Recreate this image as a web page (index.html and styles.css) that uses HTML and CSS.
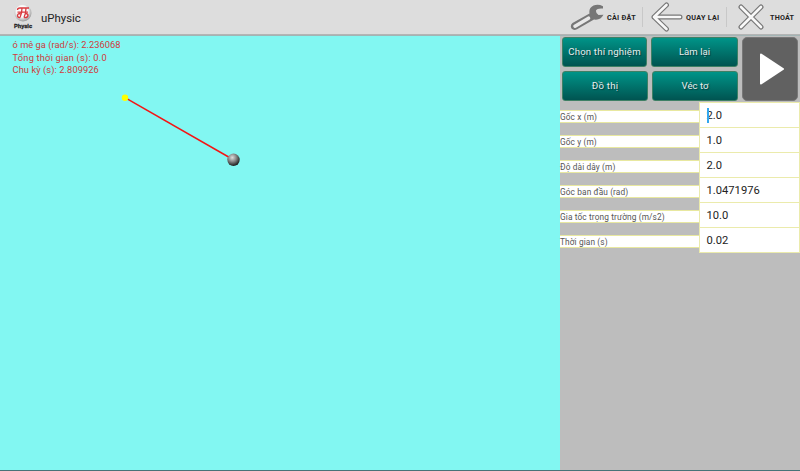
FILE: index.html
```
<!DOCTYPE html>
<html lang="vi">
<head>
<meta charset="utf-8">
<title>uPhysic</title>
<link rel="stylesheet" href="styles.css">
</head>
<body>
<header class="bar">
  <svg class="logo" width="20" height="28" viewBox="0 0 20 28">
    <defs><radialGradient id="disc" cx=".45" cy=".4" r=".6"><stop offset=".55" stop-color="#fafafa"/><stop offset="1" stop-color="#999"/></radialGradient></defs>
    <circle cx="10" cy="9" r="8.5" fill="url(#disc)"/>
    <path d="M4.500 6Q4.500 4 7 4H16M9 4Q9 9 7 13.500M13 4Q13 9 11 13.500M4.500 8.200H15M7.500 9.500Q4.500 9.500 4.500 12Q5 14 7 13.500M11 13.500Q14.500 14 15 11.500Q15 9.500 12.500 9.500" fill="none" stroke="#d93a3f" stroke-width="1.300"/>
    <text x="1" y="24" class="logo-text" textLength="18" lengthAdjust="spacingAndGlyphs">Physic</text>
  </svg>
  <h1>uPhysic</h1>
  <nav>
    <a class="set"><svg width="35" height="28" viewBox="0 0 35 28"><path d="M33 3.200Q28 .8 23.500 2.600Q18.500 5 19.500 10.500L2.500 20Q-.3 22.500 1.500 25.500Q3.800 28 7 26.300L24 16.500Q30.500 17.500 33.500 11.800L28.500 12Q25.800 10.500 26 7.500Q27 5 33 5.500Z" fill="#777"/><path d="M5 23.200L18.500 15.200" stroke="#e8e8e8" stroke-width="3.600" stroke-linecap="round"/></svg><span>CÀI ĐẶT</span></a>
    <a class="back"><svg width="32" height="30" viewBox="0 0 32 30"><path d="M15.500 3L3 15L15.500 27M3 15H29" class="outline"/><path d="M15.500 3L3 15L15.500 27M3 15H29" class="fill"/></svg><span>QUAY LẠI</span></a>
    <a class="exit"><svg width="26" height="26" viewBox="0 0 26 26"><path d="M3 3L23 23M23 3L3 23" class="outline"/><path d="M3 3L23 23M23 3L3 23" class="fill"/></svg><span>THOÁT</span></a>
  </nav>
</header>
<main>
  <section class="scene">
    <div class="stats"><p class="s1">ó mê ga (rad/s): 2.236068</p><p class="s2">Tổng thời gian (s): 0.0</p><p class="s3">Chu kỳ (s): 2.809926</p></div>
    <svg class="pendulum" width="130" height="90" viewBox="110 85 130 90">
      <defs><radialGradient id="ball" cx=".4" cy=".32" r=".65"><stop offset="0" stop-color="#ddd"/><stop offset=".5" stop-color="#888"/><stop offset="1" stop-color="#252525"/></radialGradient></defs>
      <path d="M125 97.700L233 159.500" stroke="#f51414" stroke-width="1.500"/>
      <circle cx="125" cy="97.700" r="3.200" fill="#ff0"/>
      <circle cx="233.500" cy="159.800" r="6.200" fill="url(#ball)"/>
    </svg>
  </section>
  <aside>
    <div class="controls">
      <div class="buttons">
        <div class="pair first"><button class="b1">Chọn thí nghiệm</button><button class="b2">Làm lại</button></div>
        <div class="pair second"><button class="b3">Đồ thị</button><button class="b4">Véc tơ</button></div>
      </div>
      <button class="play" aria-label="Play"><svg width="26" height="34" viewBox="0 0 26 34"><path d="M2 2.500L24 17L2 31.500Z" fill="#fff" stroke="#fff" stroke-width="2" stroke-linejoin="round"/></svg></button>
    </div>
    <div class="fields">
      <div class="field"><label><span>Gốc x (m)</span></label><div class="value"><i class="caret"></i><span>2.0</span></div></div>
      <div class="field"><label><span>Gốc y (m)</span></label><div class="value"><span>1.0</span></div></div>
      <div class="field"><label><span>Độ dài dây (m)</span></label><div class="value"><span>2.0</span></div></div>
      <div class="field"><label><span>Góc ban đầu (rad)</span></label><div class="value"><span>1.0471976</span></div></div>
      <div class="field"><label><span>Gia tốc trọng trường (m/s2)</span></label><div class="value"><span>10.0</span></div></div>
      <div class="field"><label><span>Thời gian (s)</span></label><div class="value"><span>0.02</span></div></div>
    </div>
  </aside>
</main>
</body>
</html>
```
FILE: styles.css
```
* { box-sizing: border-box; }
body { margin: 0; width: 800px; height: 471px; overflow: hidden; font-family: Roboto, "Noto Sans", sans-serif; display: flex; flex-direction: column; border-bottom: 1px solid #477378; }
.bar { height: 36px; flex: none; display: flex; align-items: flex-start; background: #ddd; border-bottom: 1px solid #a2b4b4; box-shadow: inset 0 -1px #b4b4b4; padding-left: 13px; }
.logo { margin-top: 4px; overflow: visible; }
.logo-text { font: bold 6px "Liberation Sans", sans-serif; fill: #222; stroke: #222; stroke-width: .3px; }
h1 { margin: 0 0 0 8px; font-size: 11.4px; font-weight: 400; line-height: 36px; color: #222; }
nav { margin-left: auto; display: flex; height: 36px; }
nav a { display: flex; align-items: center; font-size: 7.2px; font-weight: 700; color: #222; white-space: nowrap; height: 34px; }
.set { width: 72px; }
.set span { margin-left: 2px; letter-spacing: .27px; }
.back { width: 84px; }
.back span { letter-spacing: .3px; }
.exit { width: 74px; }
.back::before, .exit::before { content: ""; width: 1px; height: 20px; background: #c8c8c8; }
.back svg { margin: 0 3px 0 8px; }
.exit svg { margin: 0 6px 0 11px; }
.exit span { letter-spacing: .2px; }
nav svg { flex: none; }
.outline, .fill { fill: none; stroke-linecap: round; stroke-linejoin: round; }
.outline { stroke: #777; stroke-width: 5px; }
.fill { stroke: #f8f8f8; stroke-width: 2.6px; }
main { display: flex; flex: 1; min-height: 0; }
.scene { width: 560px; background: #82f7f2; padding: 1px 0 0 12.5px; }
.stats { color: #d13a3c; font-size: 9.3px; height: 39px; }
.stats p { margin: 0; height: 12.5px; line-height: 15px; white-space: nowrap; }
.s1 { letter-spacing: .02px; }
.s2 { letter-spacing: .2px; }
.s3 { letter-spacing: .08px; }
.pendulum { display: block; margin: 9px 0 0 97.5px; overflow: visible; }
aside { width: 240px; background: #bdbdbd; padding-top: 1px; }
.controls { display: flex; padding-left: 2px; height: 65px; }
.buttons { width: 180px; }
.pair { display: flex; height: 34px; }
button { font: 9.6px Roboto, "Noto Sans", sans-serif; padding: 0 0 1px; border: 1px solid #3f8065; border-radius: 3px; color: #e8eeee; background: linear-gradient(#009488, #005451); text-shadow: 1px 1px 1px #003c3c; height: 30px; white-space: nowrap; }
.b1 { width: 85px; margin-right: 4px; letter-spacing: .19px; }
.b2 { width: 87px; }
.b3 { width: 86px; margin-right: 4px; letter-spacing: .25px; }
.b4 { width: 86px; }
.play { width: 56px; height: 64px; background: #616161; border: 1px solid #777; border-radius: 5px; display: flex; align-items: center; justify-content: center; padding-left: 3px; }
.field { display: flex; height: 25px; align-items: flex-start; }
label { width: 139px; height: 13px; background: #fff; border: solid #e8e8a0; border-width: 1px 0; font-size: 8.3px; letter-spacing: .12px; line-height: 12px; color: #555; margin-top: 8px; white-space: nowrap; }
.value { width: 101px; height: 26px; background: #fff; border: 1px solid #ebebac; color: #222; font-size: 11.2px; line-height: 26px; padding-left: 6.5px; position: relative; }
.caret { position: absolute; left: 7px; top: 5px; width: 2px; height: 15px; background: #33a7ef; }
```
